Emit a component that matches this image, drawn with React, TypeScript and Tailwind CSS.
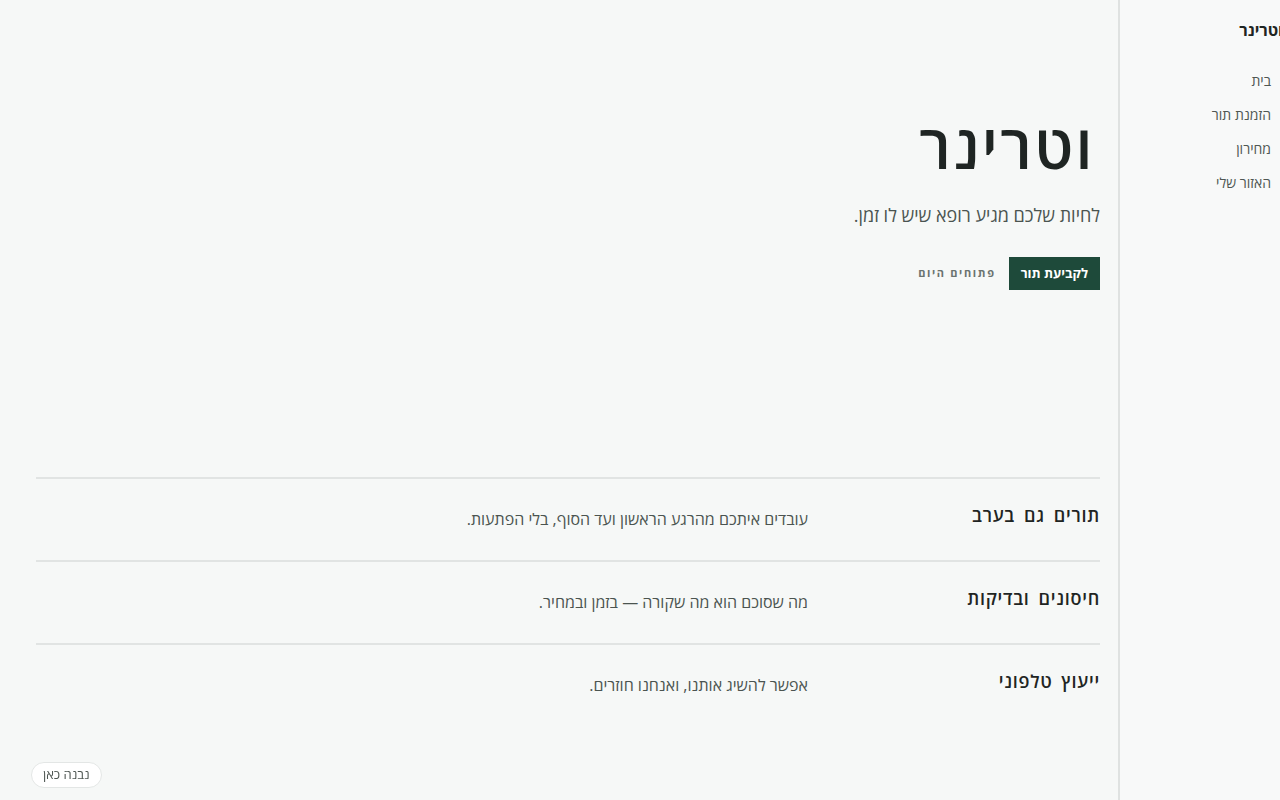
const features = [
  { title: 'תורים גם בערב', text: 'עובדים איתכם מהרגע הראשון ועד הסוף, בלי הפתעות.' },
  { title: 'חיסונים ובדיקות', text: 'מה שסוכם הוא מה שקורה — בזמן ובמחיר.' },
  { title: 'ייעוץ טלפוני', text: 'אפשר להשיג אותנו, ואנחנו חוזרים.' },
];

const nav = ['בית', 'הזמנת תור', 'מחירון', 'האזור שלי'];

export default function App() {
  return (
    <div
      dir="rtl"
      className="min-h-screen flex bg-[#f6f8f7] text-[#1f2523]"
      style={{ fontFamily: '"Open Sans", "DejaVu Sans", sans-serif' }}
    >
      {/* Sidebar */}
      <aside className="w-[162px] shrink-0 h-screen sticky top-0 overflow-hidden bg-[#f8f9f9] border-l-2 border-[#dfe2e1] pr-[9px] pt-[18px]">
        <div className="-mr-[12px] text-[16px] font-bold leading-[24px] text-[#1f2523]">וטרינר</div>
        <nav className="mt-[29px] flex flex-col gap-[14px]">
          {nav.map(n => (
            <a key={n} href="#" className="text-[14px] leading-[20px] text-[#4f5753]">
              {n}
            </a>
          ))}
        </nav>
      </aside>

      {/* Main */}
      <main className="flex-1 pr-[18px] pl-[36px]">
        <section className="pt-[106px] h-[477px]">
          <h1 className="text-[61px] leading-[80px] font-semibold tracking-[0.04em] text-[#1f2523] mr-[5px]">וטרינר</h1>
          <p className="mt-[16px] text-[18px] leading-[26px] text-[#4b5450]">לחיות שלכם מגיע רופא שיש לו זמן.</p>
          <div className="mt-[29px] flex items-center gap-[13px]">
            <a href="#" className="h-[33px] px-[12px] flex items-center bg-[#1e4a3a] text-white text-[13px] font-bold">
              לקביעת תור
            </a>
            <span className="text-[11px] font-bold tracking-[0.15em] text-[#6b7370]">פתוחים היום</span>
          </div>
        </section>

        <section>
          {features.map(f => (
            <div key={f.title} className="grid grid-cols-[260px_1fr] gap-8 items-center border-t-2 border-[#e1e4e3] h-[83px] pb-[8px]">
              <h3 className="text-[18px] font-semibold tracking-[0.04em] [word-spacing:0.2em] text-[#1f2523]">{f.title}</h3>
              <p className="text-[16px] leading-[24px] text-[#4b5450] pt-[6px]">{f.text}</p>
            </div>
          ))}
        </section>
      </main>

      <div className="fixed left-[31px] bottom-[12px] h-[26px] px-[11px] flex items-center rounded-full bg-white border border-[#e3e6e5] text-[13px] text-[#4f5753]">
        נבנה כאן
      </div>
    </div>
  );
}
